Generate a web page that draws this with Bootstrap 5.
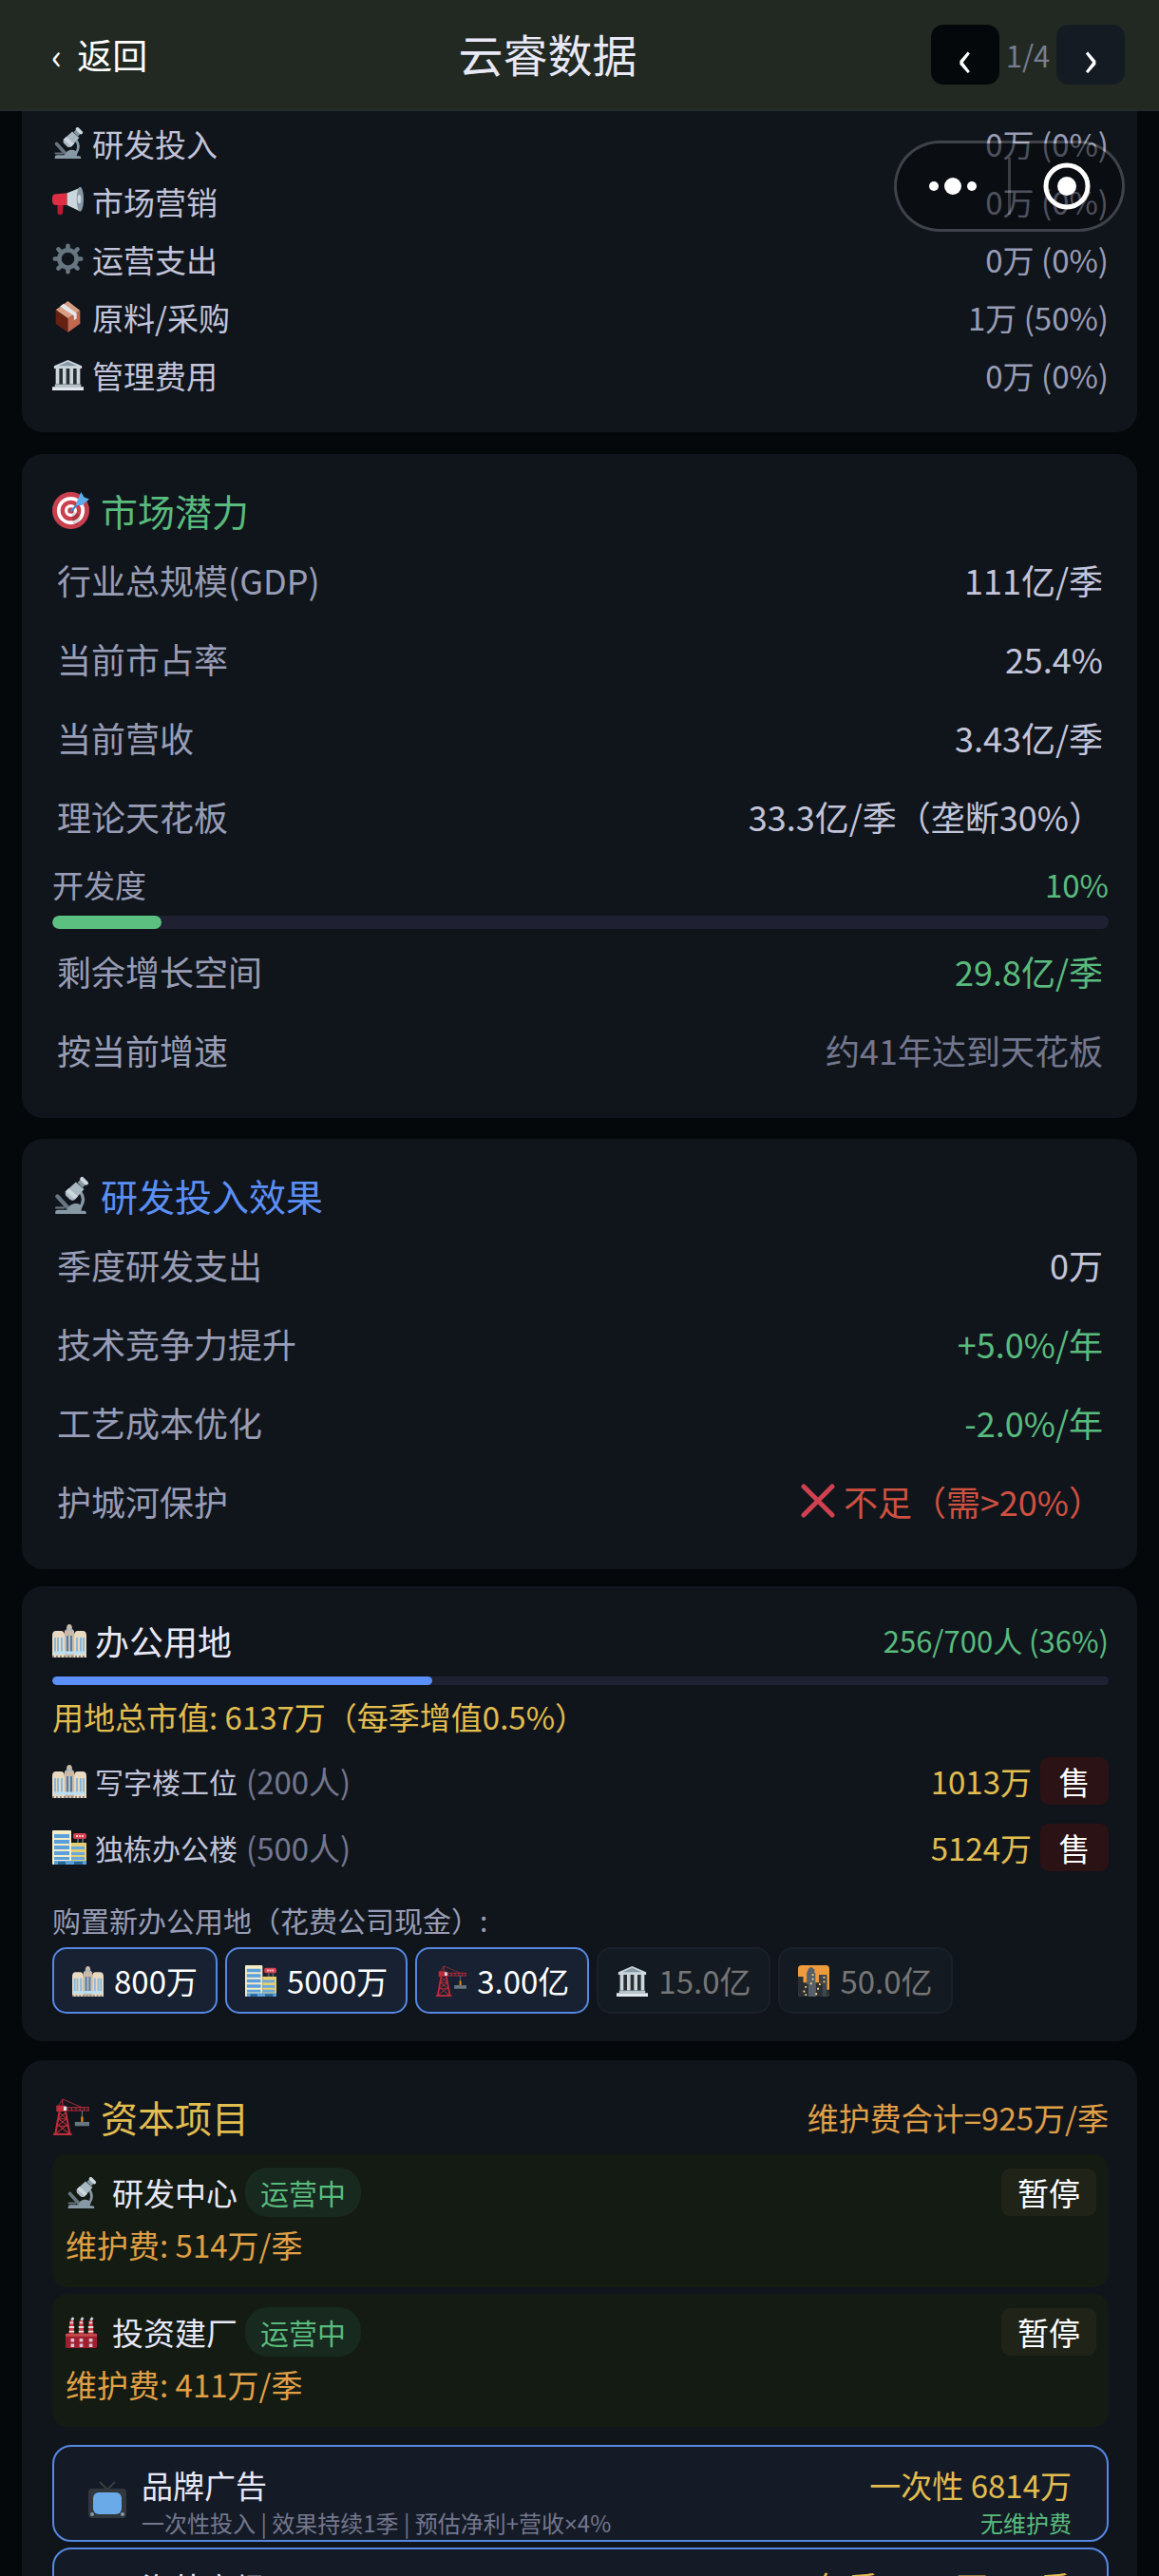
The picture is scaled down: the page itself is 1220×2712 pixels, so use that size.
<!DOCTYPE html>
<html lang="zh-CN">
<head>
    <meta charset="UTF-8">
    <title>云睿数据</title>
    <meta name="viewport" content="width=device-width, initial-scale=1">
    <link href="https://cdn.jsdelivr.net/npm/bootstrap@5.3.3/dist/css/bootstrap.min.css" rel="stylesheet">
    <script src="https://cdn.jsdelivr.net/npm/bootstrap@5.3.3/dist/js/bootstrap.bundle.min.js"></script>
    <style>
        body {
            background: #05080b;
            color: #c2c4da;
            font-family: "Noto Sans CJK SC", sans-serif;
            font-size: 33px;
            line-height: 50px;
        }

        /* text sizes and colours */
        .fs-24 { font-size: 24px; line-height: 34px; }
        .fs-30 { font-size: 30px; }
        .fs-31 { font-size: 31px; }
        .fs-36 { font-size: 36px; }
        .c-soft { color: #989db5; }
        .c-dim { color: #73778e; }
        .c-light { color: #e8e8f6; }
        .c-green { color: #59bb7d; }
        .c-blue { color: #5b8ff5; }
        .c-gold { color: #e2bd4f; }
        .c-orange { color: #e0a046; }
        .c-red { color: #cf5140; }
        .latin { font-family: "Noto Sans", sans-serif; }

        .ico { width: 33px; height: 33px; flex: none; }
        .ico-36 { width: 36px; height: 36px; }
        .ico-39 { width: 39px; height: 39px; }
        .ico-gap { gap: 9px; }

        /* top bar */
        .topbar {
            background: #212922;
            border-bottom: 2px solid #242d2e;
            height: 117px;
            padding: 0 36px;
        }
        .topbar h1 { font-size: 47px; line-height: 66px; color: #e8e8f6; font-weight: 400; padding-bottom: 4px; }
        .btn-back { display: flex; gap: 16px; font-size: 37px; color: #fff; padding: 8px 18px; border: 0; }
        .btn-page {
            width: 72px;
            height: 63px;
            border: 0;
            border-radius: 13px;
            background: #151b22;
            color: #fff;
            font-size: 54px;
            line-height: 56px;
            padding: 0;
        }
        .btn-page.first { background: #05080a; }
        .page-no { font-size: 31px; width: 60px; color: #767d92; }

        /* floating capsule */
        .capsule {
            position: absolute;
            z-index: 10;
            top: 148px;
            right: 36px;
            width: 243px;
            height: 96px;
            border: 3px solid rgba(255, 255, 255, .2);
            border-radius: 48px;
            background: rgba(4, 6, 8, .5);
            background-clip: padding-box;
        }
        .capsule button { flex: 1; border: 0; background: none; padding: 0; line-height: 0; }
        .capsule .bar { width: 3px; height: 60px; background: rgba(255, 255, 255, .2); }

        /* cards */
        .panel {
            background: #10151c;
            border: 0;
            border-radius: 22px;
            padding: 32px 30px 29px 32px;
            color: inherit;
        }
        .panel.cut { border-radius: 0 0 22px 22px; padding-top: 4px; padding-bottom: 29px; }
        .panel h2 { font-size: 39px; line-height: 54px; font-weight: 400; gap: 12px; padding-bottom: 2px; }
        .cards { padding: 0 23px; }
        .cost-row { height: 61px; padding-bottom: 2px; }
        .kv-row { height: 83px; padding: 0 6px 4px 5px; font-size: 36px; }
        .track { background: #1f2133; border-radius: 7px; height: 14px; }
        .track .progress-bar { background: #5cc080; border-radius: 7px; }
        .track.thin { height: 9px; border-radius: 5px; }
        .track.thin .progress-bar { background: #5b8ff9; border-radius: 5px; }

        /* office land */
        .land-row { height: 70px; }
        .btn-sell { width: 72px; height: 50px; padding: 0; border: 0; border-radius: 9px; background: #2b1214; color: #fff; font-size: 33px; line-height: 48px; }
        .btn-buy {
            display: flex;
            align-items: center;
            gap: 11px;
            height: 70px;
            padding: 0 19px;
            border: 2px solid #5688e2;
            border-radius: 15px;
            background: #172132;
            color: #fff;
            font-size: 33px;
            line-height: 50px;
        }
        .btn-buy:disabled { background: #141a21; border-color: #1a202a; color: #767676; opacity: 1; }

        /* capital projects */
        .project { background: #131b13; border-radius: 15px; padding: 14px 13px 20px 14px; }
        .state { font-size: 30px; line-height: 52px; padding: 0 16px; border-radius: 24px; background: #18291f; color: #59bb7d; }
        .btn-pause { height: 50px; padding: 0 17px; border: 0; border-radius: 9px; background: #202418; color: #fff; font-size: 33px; line-height: 48px; }
        .option {
            width: 100%;
            height: 102px;
            padding: 14px 37px 0 36px;
            border: 2px solid #5688e2;
            border-radius: 20px;
            background: #151b26;
            color: inherit;
            text-align: left;
        }
        .option .line { line-height: 48px; }
        .option .fs-24 { line-height: 32px; }
    </style>
</head>
<body class="vh-100 overflow-hidden position-relative">

    <!-- icon set -->
    <svg class="d-none">
        <symbol id="microscope" viewBox="0 0 36 36">
            <path d="M5 19 L16 31" stroke="#66757f" stroke-width="4" stroke-linecap="round"/>
            <path d="M27 14 Q33 22 27 30" fill="none" stroke="#8899a6" stroke-width="3"/>
            <path d="M3 36 v-2 q0-2 3-2 h9 q1-5 6-6 q5-1 8 3 l-1 4 h3 q2 0 2 2 v1z" fill="#8899a6"/>
            <path d="M3 30h9" stroke="#66757f" stroke-width="2"/>
            <path d="M23 5 L31 12 L22 22 Q20 24 17 22 L13 18 Q12 16 13 14z" fill="#aab8c2"/>
            <path d="M16 11 L25 19 L22 22 L13 14z" fill="#ccd6dd"/>
            <path d="M27 3 L32 8" stroke="#8899a6" stroke-width="7"/>
            <path d="M29 2 L33 6" stroke="#ccd6dd" stroke-width="4" stroke-linecap="round"/>
        </symbol>
        <symbol id="megaphone" viewBox="0 0 36 36">
            <path d="M6 18h7l-1 14q0 2-3 2t-3-2z" fill="#be1931"/>
            <path d="M4 10 Q0 10 0 15 v3 q0 5 5 5 h12V9z" fill="#dd2e44"/>
            <path d="M17 9 L32 3 V30 L17 23z" fill="#ccd6dd"/>
            <ellipse cx="32" cy="16" rx="4" ry="14" fill="#8899a6"/>
            <ellipse cx="31" cy="16" rx="2" ry="5" fill="#ccd6dd"/>
        </symbol>
        <symbol id="gear" viewBox="0 0 36 36">
            <g stroke="#66757f" stroke-width="5" stroke-linecap="round">
                <path d="M18 3V8M18 28V33M3 18H8M28 18H33M7 7L11 11M25 25L29 29M7 29L11 25M25 11L29 7"/>
            </g>
            <circle cx="18" cy="18" r="10" fill="none" stroke="#66757f" stroke-width="5"/>
        </symbol>
        <symbol id="box" viewBox="0 0 36 36">
            <path d="M18 0 L32 11 L18 20 L4 10z" fill="#d99e82"/>
            <path d="M4 10 L18 20 V36 L4 26z" fill="#662113"/>
            <path d="M32 11 V26 L18 36 V20z" fill="#c1694f"/>
            <path d="M9 6 L13 3 L28 14 V20 L25 22 V17z" fill="#e1e8ed"/>
        </symbol>
        <symbol id="bank" viewBox="0 0 36 36">
            <path d="M18 1 L34 8 V11 H2 V8z" fill="#ccd6dd"/>
            <path d="M18 3 L29 8 H7z" fill="#8899a6"/>
            <path d="M4 11H32V29H4z" fill="#292f33"/>
            <path d="M4 11h4v18h-4zM12 11h4v18h-4zM20 11h4v18h-4zM28 11h4v18h-4z" fill="#ccd6dd"/>
            <path d="M3 29H33V32H3z" fill="#b6c2ca"/>
            <path d="M0 32H36V36H0z" fill="#e1e8ed"/>
        </symbol>
        <symbol id="target" viewBox="0 0 36 36">
            <circle cx="18" cy="18" r="18" fill="#c9404f"/>
            <circle cx="18" cy="18" r="13.5" fill="#fff"/>
            <circle cx="18" cy="18" r="10" fill="#c9404f"/>
            <circle cx="18" cy="18" r="6" fill="#fff"/>
            <circle cx="18" cy="18" r="3" fill="#c9404f"/>
            <path d="M19 18 L28 23 L24 33 L20 30z" fill="#000" opacity=".15"/>
            <path d="M18 19 L28 8" stroke="#3b88c3" stroke-width="2"/>
            <path d="M24 9 L28 0 L31 5 L36 7 L29 13 L23 13z" fill="#5dadec"/>
        </symbol>
        <symbol id="cross" viewBox="0 0 36 36">
            <path d="M3 3 L33 33 M33 3 L3 33" stroke="#cf4150" stroke-width="5" stroke-linecap="round"/>
        </symbol>
        <symbol id="towers" viewBox="0 0 36 36">
            <path d="M0 13 q0-5 4-5 h5 q4 0 4 5 V36H0z M23 13 q0-5 4-5 h5 q4 0 4 5 V36H23z" fill="#e8d9c0"/>
            <path d="M13 8 l2-2 q0-5 3-5 t3 5 l2 2 V36H13z" fill="#c9b9a6"/>
            <path d="M3 15V30M6 15V30M10 15V30M26 15V30M30 15V30M33 15V30" stroke="#88b9dc" stroke-width="2"/>
            <path d="M16 5V8M20 5V8" stroke="#5dadec"/>
            <path d="M16 13V32M20 13V32" stroke="#4b7fb2" stroke-width="2"/>
            <path d="M2 31H34" stroke="#b9dff5" stroke-width="3"/>
            <path d="M0 35H36" stroke="#8d8579" stroke-width="2" stroke-dasharray="2 2"/>
        </symbol>
        <symbol id="office" viewBox="0 0 36 36">
            <rect width="20" height="36" rx="1" fill="#f4edc8"/>
            <path d="M20 13H36V36H20z" fill="#e6cf72"/>
            <path d="M2 4H18V8H2zM2 10H18V14H2zM2 16H18V20H2zM2 22H18V26H2zM2 28H18V31H2z" fill="#5b9fdd"/>
            <path d="M20 17H34V20H20zM20 23H34V26H20zM20 28H34V31H20z" fill="#68a9dd"/>
            <path d="M2 32H36V36H2z" fill="#5b9fdd"/>
            <path d="M6 33H14V36H6zM23 33H32V36H23z" fill="#2a6797"/>
            <path d="M27 9V13M32 9V13" stroke="#55606a" stroke-width="2"/>
            <rect x="22" y="3" width="14" height="6" rx="2" fill="#d8404f"/>
            <path d="M25 6H34" stroke="#f6c6cb" stroke-width="2" stroke-dasharray="2 1"/>
        </symbol>
        <symbol id="crane" viewBox="0 0 36 36">
            <path d="M10 1 L5 9 M10 1 L29 9" fill="none" stroke="#8f2a35" stroke-width="1"/>
            <path d="M10 1V10" stroke="#be2c3a" stroke-width="1"/>
            <path d="M12 9H36M12 12H36" stroke="#be2c3a" stroke-width="1"/>
            <path d="M15 9V12M19 9V12M23 9V12M27 9V12M31 9V12M35 9V12" stroke="#be2c3a"/>
            <path d="M4 7H13V13H4z" fill="#be2c3a"/>
            <path d="M11 8h3v4h-3z" fill="#dbe4ea"/>
            <path d="M7 13 L3 35 M13 13 L17 35" stroke="#be2c3a" stroke-width="2"/>
            <path d="M7 14L14 20L6 26L16 34M13 14L6 20L14 26L4 34M6 20H14M5 27H15" fill="none" stroke="#be2c3a" stroke-width="1"/>
            <path d="M1 35H19" stroke="#be2c3a" stroke-width="2"/>
            <path d="M29 12V20" stroke="#66757f"/>
            <path d="M29 18V23" stroke="#f4900c" stroke-width="2"/>
            <path d="M22 23H36V27H22z" fill="#66757f"/>
        </symbol>
        <symbol id="nightcity" viewBox="0 0 36 36">
            <rect width="36" height="36" rx="4" fill="#ef9a3c"/>
            <path d="M0 13H6V20H12V36H4Q0 36 0 32zM20 20H28V12H33V28H36V32Q36 36 32 36H20z" fill="#292f33"/>
            <path d="M10 9 L12 4 L15 2 L19 5 V9 H20V36H12V22H10z" fill="#55606a"/>
            <path d="M24 11H33V36H28V20H24z" fill="#3c464d"/>
            <g fill="#ffd983">
                <path d="M16 10h2v2h-2zM16 15h2v2h-2zM14 20h2v2h-2zM8 24h2v2h-2zM6 29h2v2h-2zM8 33h2v2h-2zM29 13h2v2h-2zM29 18h2v2h-2zM24 21h2v2h-2zM22 26h2v2h-2zM20 32h2v2h-2z"/>
            </g>
        </symbol>
        <symbol id="factory" viewBox="0 0 36 36">
            <path d="M5 4H9L10 20H4zM16 4H20L21 20H15zM27 4H31L32 20H26z" fill="#d43a49"/>
            <path d="M5 7H9M4 12H10M4 17H10M16 7H20M15 12H21M15 17H21M27 7H31M26 12H32M26 17H32" stroke="#e6e1dc" stroke-width="2"/>
            <path d="M7 4l2-3M18 4l2-3M29 4l2-3" stroke="#ccd6dd" stroke-width="3"/>
            <rect y="19" width="36" height="17" rx="2" fill="#a01f2e"/>
            <path d="M0 21H36" stroke="#c44a4c" stroke-width="3"/>
            <path d="M6 25h4v4h-4zM16 25h4v4h-4zM27 25h4v4h-4zM6 31h4v4h-4zM16 31h4v4h-4zM27 31h4v4h-4z" fill="#d9c3d4"/>
        </symbol>
        <symbol id="tv" viewBox="0 0 40 40">
            <path d="M12 1 L20 9 L28 1" fill="none" stroke="#3a3d3d" stroke-width="2"/>
            <rect y="8" width="40" height="31" rx="4" fill="#31373d"/>
            <rect x="5" y="12" width="30" height="23" rx="6" fill="#6aaae8"/>
            <circle cx="4" cy="35" r="2" fill="#8899a6"/>
            <circle cx="36" cy="35" r="2" fill="#8899a6"/>
        </symbol>
    </svg>

    <header class="topbar d-flex justify-content-between align-items-center">
        <button type="button" class="btn btn-back"><span>‹</span><span>返回</span></button>
        <h1 class="m-0">云睿数据</h1>
        <div class="d-flex align-items-center">
            <button type="button" class="btn btn-page first" aria-label="上一页">‹</button>
            <span class="page-no text-center">1/4</span>
            <button type="button" class="btn btn-page" aria-label="下一页">›</button>
        </div>
    </header>

    <div class="capsule d-flex align-items-center">
        <button type="button" aria-label="更多">
            <svg width="54" height="20" viewBox="0 0 54 20" fill="#fff"><circle cx="7" cy="10" r="5"/><circle cx="27" cy="10" r="9"/><circle cx="47" cy="10" r="5"/></svg>
        </button>
        <div class="bar"></div>
        <button type="button" aria-label="关闭">
            <svg width="50" height="50" viewBox="0 0 50 50"><circle cx="25" cy="25" r="22" fill="none" stroke="#fff" stroke-width="5"/><circle cx="25" cy="25" r="10" fill="#fff"/></svg>
        </button>
    </div>

    <main class="cards">
        <!-- 支出构成 -->
        <section class="card panel cut">
            <div class="cost-row d-flex justify-content-between align-items-center">
                <span class="d-flex align-items-center ico-gap"><svg class="ico"><use href="#microscope"/></svg>研发投入</span>
                <span class="c-soft">0万 (0%)</span>
            </div>
            <div class="cost-row d-flex justify-content-between align-items-center">
                <span class="d-flex align-items-center ico-gap"><svg class="ico"><use href="#megaphone"/></svg>市场营销</span>
                <span class="c-soft">0万 (0%)</span>
            </div>
            <div class="cost-row d-flex justify-content-between align-items-center">
                <span class="d-flex align-items-center ico-gap"><svg class="ico"><use href="#gear"/></svg>运营支出</span>
                <span class="c-soft">0万 (0%)</span>
            </div>
            <div class="cost-row d-flex justify-content-between align-items-center">
                <span class="d-flex align-items-center ico-gap"><svg class="ico"><use href="#box"/></svg>原料/采购</span>
                <span class="c-soft">1万 (50%)</span>
            </div>
            <div class="cost-row d-flex justify-content-between align-items-center">
                <span class="d-flex align-items-center ico-gap"><svg class="ico"><use href="#bank"/></svg>管理费用</span>
                <span class="c-soft">0万 (0%)</span>
            </div>
        </section>

        <!-- 市场潜力 -->
        <section class="card panel" style="margin-top: 23px">
            <h2 class="d-flex align-items-center c-green mb-1"><svg class="ico ico-39"><use href="#target"/></svg>市场潜力</h2>
            <div class="kv-row d-flex justify-content-between align-items-center"><span class="c-soft">行业总规模(GDP)</span><span>111亿/季</span></div>
            <div class="kv-row d-flex justify-content-between align-items-center"><span class="c-soft">当前市占率</span><span>25.4%</span></div>
            <div class="kv-row d-flex justify-content-between align-items-center"><span class="c-soft">当前营收</span><span>3.43亿/季</span></div>
            <div class="kv-row d-flex justify-content-between align-items-center"><span class="c-soft">理论天花板</span><span>33.3亿/季（垄断30%）</span></div>
            <div class="d-flex justify-content-between pt-1 pb-2"><span class="c-soft">开发度</span><span class="c-green">10%</span></div>
            <div class="progress track mb-1" role="progressbar" aria-label="开发度" aria-valuenow="10" aria-valuemin="0" aria-valuemax="100">
                <div class="progress-bar" style="width: 10.3%"></div>
            </div>
            <div class="kv-row d-flex justify-content-between align-items-center"><span class="c-soft">剩余增长空间</span><span class="c-green">29.8亿/季</span></div>
            <div class="kv-row d-flex justify-content-between align-items-center"><span class="c-soft">按当前增速</span><span class="c-dim">约41年达到天花板</span></div>
        </section>

        <!-- 研发投入效果 -->
        <section class="card panel" style="margin-top: 22px">
            <h2 class="d-flex align-items-center c-blue mb-1"><svg class="ico ico-39"><use href="#microscope"/></svg>研发投入效果</h2>
            <div class="kv-row d-flex justify-content-between align-items-center"><span class="c-soft">季度研发支出</span><span>0万</span></div>
            <div class="kv-row d-flex justify-content-between align-items-center"><span class="c-soft">技术竞争力提升</span><span class="c-green">+5.0%/年</span></div>
            <div class="kv-row d-flex justify-content-between align-items-center"><span class="c-soft">工艺成本优化</span><span class="c-green">-2.0%/年</span></div>
            <div class="kv-row d-flex justify-content-between align-items-center"><span class="c-soft">护城河保护</span><span class="d-flex align-items-center ico-gap c-red"><svg class="ico ico-36"><use href="#cross"/></svg>不足（需&gt;20%）</span></div>
        </section>

        <!-- 办公用地 -->
        <section class="card panel" style="margin-top: 18px">
            <div class="d-flex justify-content-between align-items-center">
                <span class="d-flex align-items-center ico-gap fs-36 c-light"><svg class="ico ico-36"><use href="#towers"/></svg>办公用地</span>
                <span class="fs-31 c-green">256/700人 (36%)</span>
            </div>
            <div class="progress track thin mb-2" style="margin-top: 13px" role="progressbar" aria-label="办公用地" aria-valuenow="36" aria-valuemin="0" aria-valuemax="100">
                <div class="progress-bar" style="width: 36%"></div>
            </div>
            <div class="c-gold mb-2">用地总市值: 6137万（每季增值0.5%）</div>
            <div class="land-row d-flex align-items-center ico-gap">
                <svg class="ico ico-36"><use href="#towers"/></svg><span class="fs-30">写字楼工位</span><span class="c-dim">(200人)</span>
                <span class="c-gold ms-auto">1013万</span>
                <button type="button" class="btn btn-sell">售</button>
            </div>
            <div class="land-row d-flex align-items-center ico-gap">
                <svg class="ico ico-36"><use href="#office"/></svg><span class="fs-30">独栋办公楼</span><span class="c-dim">(500人)</span>
                <span class="c-gold ms-auto">5124万</span>
                <button type="button" class="btn btn-sell">售</button>
            </div>
            <div class="fs-30 c-soft pt-3 mb-1">购置新办公用地（花费公司现金）:</div>
            <div class="d-flex flex-wrap gap-2">
                <button type="button" class="btn btn-buy"><svg class="ico"><use href="#towers"/></svg>800万</button>
                <button type="button" class="btn btn-buy"><svg class="ico"><use href="#office"/></svg>5000万</button>
                <button type="button" class="btn btn-buy"><svg class="ico"><use href="#crane"/></svg>3.00亿</button>
                <button type="button" class="btn btn-buy" disabled><svg class="ico"><use href="#bank"/></svg>15.0亿</button>
                <button type="button" class="btn btn-buy" disabled><svg class="ico"><use href="#nightcity"/></svg>50.0亿</button>
            </div>
        </section>

        <!-- 资本项目 -->
        <section class="card panel" style="margin-top: 20px">
            <div class="d-flex justify-content-between align-items-center" style="margin-bottom: 11px">
                <h2 class="d-flex align-items-center c-gold m-0"><svg class="ico ico-39"><use href="#crane"/></svg>资本项目</h2>
                <span class="c-orange">维护费合计=925万/季</span>
            </div>
            <div class="project">
                <div class="d-flex align-items-center">
                    <svg class="ico me-3"><use href="#microscope"/></svg>
                    <span class="c-light me-2">研发中心</span>
                    <span class="state">运营中</span>
                    <button type="button" class="btn btn-pause ms-auto">暂停</button>
                </div>
                <div class="c-orange mt-1">维护费: 514万/季</div>
            </div>
            <div class="project" style="margin: 7px 0 19px">
                <div class="d-flex align-items-center">
                    <svg class="ico me-3"><use href="#factory"/></svg>
                    <span class="c-light me-2">投资建厂</span>
                    <span class="state">运营中</span>
                    <button type="button" class="btn btn-pause ms-auto">暂停</button>
                </div>
                <div class="c-orange mt-1">维护费: 411万/季</div>
            </div>
            <div class="d-grid" style="gap: 6px">
                <button type="button" class="option d-flex align-items-center gap-3">
                    <svg class="flex-shrink-0" width="40" height="40"><use href="#tv"/></svg>
                    <span class="flex-grow-1">
                        <span class="line d-block c-light">品牌广告</span>
                        <span class="fs-24 d-block c-dim">一次性投入 | 效果持续1季 | 预估净利+营收<span class="latin">×</span>4%</span>
                    </span>
                    <span class="text-end">
                        <span class="line d-block c-gold">一次性 6814万</span>
                        <span class="fs-24 d-block c-green">无维护费</span>
                    </span>
                </button>
                <button type="button" class="option d-flex align-items-center gap-3">
                    <svg class="flex-shrink-0" width="40" height="40"><use href="#tv"/></svg>
                    <span class="flex-grow-1">
                        <span class="line d-block c-light">海外市场</span>
                        <span class="fs-24 d-block c-dim">持续投入</span>
                    </span>
                    <span class="text-end">
                        <span class="line d-block c-gold">每季 2056万<span class="latin">×</span>12季</span>
                        <span class="fs-24 d-block c-green">无维护费</span>
                    </span>
                </button>
            </div>
        </section>
    </main>

</body>
</html>
